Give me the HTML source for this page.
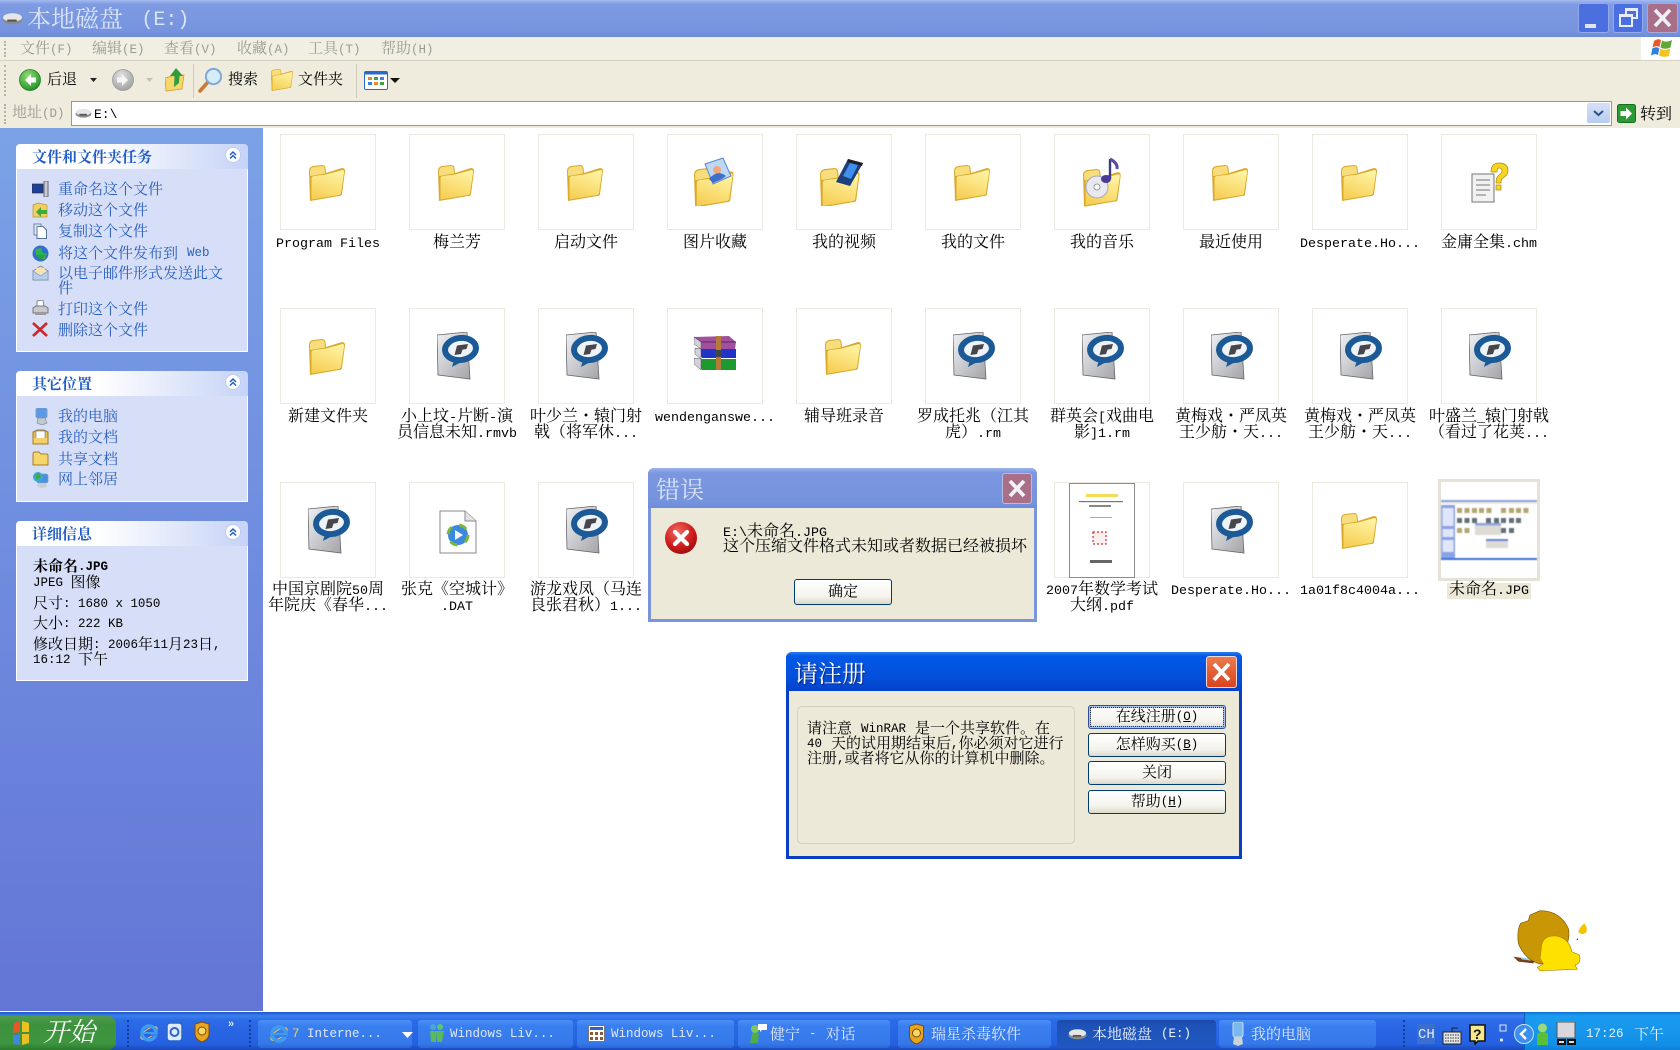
<!DOCTYPE html>
<html lang="zh-CN"><head><meta charset="utf-8"><title>本地磁盘 (E:)</title>
<style>
html,body{margin:0;padding:0;width:1680px;height:1050px;overflow:hidden;background:#fff}
body{position:relative;font-family:"Liberation Mono","Noto Serif CJK SC",serif;font-size:15px;color:#000}
i{font-style:normal;font-family:"Liberation Mono",monospace;font-size:.8333em;line-height:1;position:relative;top:-2px}
div,svg{position:absolute}
.t{position:absolute;white-space:nowrap;line-height:16px;margin-top:2px}
.m{color:#9c9b96}
.m i{top:0}
.d i{top:-1px}
.dl i{top:0}
.dr i{top:-1px}
.g{width:0;border-left:2px dotted #b5b2a4}
.lk{color:#2a5fc2;left:58px}
.hd{left:16px;width:232px;height:25px;border-radius:4px 4px 0 0;background:linear-gradient(90deg,#fff 0,#fff 35%,#c6d3f7 100%)}
.bd{left:16px;width:230px;background:#d6dff7;border:1px solid #fff;border-top:0}
.ht{left:32px;font-weight:bold;color:#215dc6}
.ch{left:225px}
.b{width:94px;height:94px;border:1px solid #ebe9e0;background:#fff}
.l{position:absolute;width:130px;text-align:center;font-size:16px;line-height:16px;white-space:nowrap;margin-top:1px}
.l i{top:0}
.btn{box-sizing:border-box;border:1px solid #003c74;border-radius:3px;background:linear-gradient(#fff,#f4f3ec 70%,#dcd8c8);text-align:center;font-size:15px;line-height:23px}
.btn i{top:-1px}
.tb{top:1020px;height:28px;border-radius:3px;background:linear-gradient(#4a90f5,#3a7ff0 20%,#3478ea 85%,#2a66d8)}
.tt{color:#dfe8fb;top:1026px;font-size:15px}
</style></head><body>
<svg width="0" height="0" style="left:0;top:0"><defs>
<linearGradient id="fg" x1=".7" y1="0" x2=".3" y2="1"><stop offset="0" stop-color="#fff3a2"/><stop offset="1" stop-color="#f6cf55"/></linearGradient>
<linearGradient id="pg" x1="0" y1="0" x2="1" y2="1"><stop offset="0" stop-color="#eff1f5"/><stop offset="1" stop-color="#a4a4a8"/></linearGradient>
<radialGradient id="er" cx=".4" cy=".3" r=".8"><stop offset="0" stop-color="#f06a60"/><stop offset=".6" stop-color="#cf1a1a"/><stop offset="1" stop-color="#8e0b0b"/></radialGradient>
<radialGradient id="gb" cx=".4" cy=".3" r=".8"><stop offset="0" stop-color="#8fdc6e"/><stop offset=".7" stop-color="#3aa53a"/><stop offset="1" stop-color="#1b7a24"/></radialGradient>
<radialGradient id="gy" cx=".4" cy=".3" r=".8"><stop offset="0" stop-color="#e2e2e2"/><stop offset="1" stop-color="#9a9a9a"/></radialGradient>
<symbol id="fd" viewBox="0 0 36 36">
<path d="M1 36L0 6Q0 2 4 1L13 0Q16 0 16.500 3L17 8L33 3Q36 3 36 6L33 29Q33 31 30 31Z" fill="#d9a92c"/>
<path d="M1.200 11L1 6Q1 3 4.500 2L13 1Q15 1 15.500 3L16 8.500Z" fill="#f8dd7c"/>
<path d="M2.500 34.500L2.500 13Q2.500 11.500 5 11L17 9.500L33.500 5Q35.300 5 35 7.500L32 28Q32 29.500 30 30Z" fill="url(#fg)"/>
</symbol>
<symbol id="rp" viewBox="0 0 42 48">
<path d="M0 3L30 0L33 47L1 43Z" fill="url(#pg)" stroke="#66666c" stroke-width=".8"/>
<path d="M17 28L15 35L28 28Z" fill="#1b5a96"/>
<ellipse cx="23.500" cy="17" rx="15.500" ry="11" transform="rotate(-7 23.500 17)" fill="#eef3f8" stroke="#1b5a96" stroke-width="6"/>
<path d="M17.500 23L20 13.500L31 12L29.500 17L25.500 17.600L24 22Z" fill="#47474b"/>
</symbol>
<symbol id="drv" viewBox="0 0 20 12">
<ellipse cx="10" cy="7" rx="9.500" ry="4.500" fill="#8a8a8a"/><ellipse cx="10" cy="5" rx="9" ry="4" fill="#e6e6e6"/><rect x="5" y="7" width="9" height="2" fill="#555"/>
</symbol>
<symbol id="ie" viewBox="0 0 20 20">
<ellipse cx="10" cy="10" rx="9.500" ry="4" transform="rotate(-35 10 10)" fill="none" stroke="#f4c84a" stroke-width="1"/>
<circle cx="10" cy="10" r="7" fill="none" stroke="#3f9bf0" stroke-width="3.400"/><rect x="5" y="9" width="10" height="2" fill="#3f9bf0"/><rect x="12" y="11" width="6" height="2" fill="#3a7ff0"/>
</symbol>
<symbol id="cv" viewBox="0 0 16 16">
<circle cx="8" cy="8" r="7.500" fill="#fff" stroke="#c0cdf0"/><path d="M5 8L8 5L11 8M5 11.500L8 8.500L11 11.500" fill="none" stroke="#215dc6" stroke-width="1.500"/>
</symbol>
</defs></svg>

<!-- title bar -->
<div style="left:0;top:0;width:1680px;height:37px;background:linear-gradient(#a4b9ef 0,#7e9ae2 12%,#7694de 85%,#6d8ad8 100%)"></div>
<svg style="left:2px;top:12px" width="21" height="13"><use href="#drv"/></svg>
<div class="t" style="left:27px;top:6px;font-size:24px;line-height:28px;color:#d9e4f7">本地磁盘 <i style="margin-left:4px">(E:)</i></div>
<div style="left:1578px;top:3px;width:31px;height:30px;box-sizing:border-box;border:1px solid #93a9ea;border-radius:3px;background:#4c6fe0"><div style="left:6px;top:20px;width:11px;height:4px;background:#dfe6fa"></div></div>
<div style="left:1613px;top:3px;width:30px;height:30px;box-sizing:border-box;border:1px solid #93a9ea;border-radius:3px;background:#4c6fe0"><div style="left:11px;top:4px;width:13px;height:11px;box-sizing:border-box;border:2px solid #e6ecfb;border-top-width:3px"></div><div style="left:5px;top:10px;width:14px;height:13px;box-sizing:border-box;border:2px solid #e6ecfb;border-top-width:3px;background:#4c6fe0"></div></div>
<div style="left:1647px;top:3px;width:31px;height:30px;box-sizing:border-box;border:1px solid #a9a9d6;border-radius:3px;background:#a96f88"><svg width="29" height="28"><path d="M7 6L22 22M22 6L7 22" stroke="#eef0f8" stroke-width="3.600"/></svg></div>

<!-- menu -->
<div style="left:0;top:37px;width:1680px;height:23px;background:#f1efe3;border-bottom:1px solid #d6d3c5"></div>
<div class="g" style="left:4px;top:41px;height:16px"></div>
<div class="t m" style="left:20px;top:40px">文件<i>(F)</i></div>
<div class="t m" style="left:92px;top:40px">编辑<i>(E)</i></div>
<div class="t m" style="left:164px;top:40px">查看<i>(V)</i></div>
<div class="t m" style="left:237px;top:40px">收藏<i>(A)</i></div>
<div class="t m" style="left:308px;top:40px">工具<i>(T)</i></div>
<div class="t m" style="left:381px;top:40px">帮助<i>(H)</i></div>
<div style="left:1641px;top:37px;width:39px;height:23px;background:#fff"></div>
<svg style="left:1651px;top:38px" width="22" height="21" viewBox="0 0 22 21"><path d="M3 3Q7 0 10 2L8.500 9Q5 7 1.500 9.500Z" fill="#e8562a"/><path d="M11 2.500Q15 5 21 2L19.500 9.500Q14 12 9.500 9.500Z" fill="#5da836"/><path d="M1.300 10.500Q5 8 8.300 10.300L7 17Q4 15 0 17.500Z" fill="#2f7fdc"/><path d="M9.300 10.800Q14 13 19.300 10.500L18 18Q12 20 8 17.500Z" fill="#f5c022"/></svg>

<!-- toolbar -->
<div style="left:0;top:61px;width:1680px;height:39px;background:#efecde;border-bottom:1px solid #d2cfc0"></div>
<div class="g" style="left:4px;top:65px;height:31px"></div>
<svg style="left:19px;top:69px" width="22" height="22" viewBox="0 0 22 22"><circle cx="11" cy="11" r="10.500" fill="url(#gb)" stroke="#2a7f2a" stroke-width=".8"/><path d="M12 5L6 11L12 17V13.500H17V8.500H12Z" fill="#fff"/></svg>
<div class="t" style="left:47px;top:71px">后退</div>
<svg style="left:90px;top:78px" width="7" height="4"><path d="M0 0H7L3.500 4Z" fill="#222"/></svg>
<svg style="left:112px;top:69px" width="22" height="22" viewBox="0 0 22 22"><circle cx="11" cy="11" r="10.500" fill="url(#gy)" stroke="#999" stroke-width=".8"/><path d="M10 5L16 11L10 17V13.500H5V8.500H10Z" fill="#f4f4f4"/></svg>
<svg style="left:146px;top:78px" width="7" height="4"><path d="M0 0H7L3.500 4Z" fill="#c4c2b6"/></svg>
<svg style="left:165px;top:67px" width="22" height="25" viewBox="0 0 22 25"><path d="M1 24L0 11L7 9L19 8L17 22Z" fill="#f5d76a" stroke="#c9a030" stroke-width=".8"/><path d="M11 1L18 9H14.500L14 16L9 20L9.500 9H5Z" fill="#2f9e3a"/></svg>
<div style="left:193px;top:64px;width:1px;height:34px;background:#cfccbc"></div>
<svg style="left:198px;top:67px" width="26" height="26" viewBox="0 0 26 26"><path d="M2 24L10 15" stroke="#c97a35" stroke-width="3.600" stroke-linecap="round"/><circle cx="15.500" cy="9.500" r="7.600" fill="#d7ecfb" stroke="#7fa9d6" stroke-width="2"/></svg>
<div class="t" style="left:228px;top:71px">搜索</div>
<svg style="left:271px;top:69px" width="22" height="22"><use href="#fd"/></svg>
<div class="t" style="left:298px;top:71px">文件夹</div>
<div style="left:356px;top:64px;width:1px;height:34px;background:#cfccbc"></div>
<svg style="left:364px;top:71px" width="24" height="19" viewBox="0 0 24 19"><rect x=".5" y=".5" width="23" height="18" rx="1.500" fill="#fff" stroke="#2b6bc8"/><rect x=".5" y=".5" width="23" height="3" fill="#2b6bc8"/><g fill="#e08a30"><rect x="4" y="6" width="4" height="3"/><rect x="10" y="11" width="4" height="3"/></g><g fill="#3aa53a"><rect x="10" y="6" width="4" height="3"/><rect x="16" y="11" width="4" height="3"/></g><g fill="#3f7fe0"><rect x="16" y="6" width="4" height="3"/><rect x="4" y="11" width="4" height="3"/></g></svg>
<svg style="left:390px;top:78px" width="10" height="5"><path d="M0 0H10L5 5Z" fill="#111"/></svg>

<!-- address bar -->
<div style="left:0;top:100px;width:1680px;height:28px;background:#efecde"></div>
<div class="g" style="left:4px;top:104px;height:20px"></div>
<div class="t m" style="left:12px;top:104px">地址<i>(D)</i></div>
<div style="left:71px;top:101px;width:1539px;height:23px;background:#fff;border:1px solid #7f9db9"></div>
<svg style="left:75px;top:108px" width="17" height="10"><use href="#drv"/></svg>
<div class="t" style="left:94px;top:107px;font-size:15px"><i style="font-size:13px">E:\</i></div>
<div style="left:1587px;top:103px;width:23px;height:20px;background:linear-gradient(#d4e0f8,#b9cdf0);border-radius:2px"><svg width="23" height="20"><path d="M7 8L11.500 12L16 8" fill="none" stroke="#2f4f88" stroke-width="2"/></svg></div>
<svg style="left:1617px;top:104px" width="19" height="19" viewBox="0 0 19 19"><rect x=".5" y=".5" width="18" height="18" rx="2" fill="#2c9a34" stroke="#1a6e22"/><path d="M9 3.500L15 9.500L9 15.500V12H3.500V7H9Z" fill="#fff"/></svg>
<div class="t" style="left:1640px;top:105px;font-size:16px">转到</div>

<!-- sidebar -->
<div style="left:0;top:128px;width:263px;height:883px;background:linear-gradient(#7ba2e7,#6375d6)"></div>
<!-- panel 1 -->
<div class="hd" style="top:144px"></div>
<div class="bd" style="top:169px;height:182px"></div>
<div class="t ht" style="top:149px">文件和文件夹任务</div>
<svg class="ch" style="top:147px" width="16" height="16"><use href="#cv"/></svg>
<svg style="left:32px;top:181px" width="17" height="16" viewBox="0 0 17 16"><rect x="0" y="3" width="11" height="9" fill="#1c3f9e" stroke="#333" stroke-width=".7"/><rect x="12" y="0" width="4" height="16" fill="#c8ccd2" stroke="#667"/></svg>
<svg style="left:32px;top:202px" width="17" height="16" viewBox="0 0 17 16"><path d="M1 15V3L6 1L15 3V15Z" fill="#f0d060" stroke="#b89530" stroke-width=".7"/><path d="M4 10L9 5V8H15V12H9V15Z" fill="#3caa3c"/></svg>
<svg style="left:33px;top:223px" width="15" height="16" viewBox="0 0 15 16"><path d="M1 1H8V3H1Z" fill="#f2f2f2"/><path d="M4 3.500H10L13.500 7V15.500H4Z" fill="#fff" stroke="#53709c"/><path d="M1 1H8V3.500H4V12H1Z" fill="#dfe6f2" stroke="#53709c" stroke-width=".8"/></svg>
<svg style="left:32px;top:245px" width="17" height="17" viewBox="0 0 17 17"><circle cx="8.500" cy="8.500" r="8" fill="#2f6fd0"/><path d="M3 5Q7 2 10 4L8 8L4 9ZM10 10L15 8L13 14L10 14Z" fill="#4aa848"/><path d="M8.500 5L13.500 10H3.500Z" fill="#25b84a"/><path d="M8.500 15L13.500 10H3.500Z" fill="#25a040"/></svg>
<svg style="left:32px;top:265px" width="17" height="16" viewBox="0 0 17 16"><path d="M1 6L8.500 1L16 6V15H1Z" fill="#dce4f2" stroke="#7f8fae"/><rect x="4" y="3" width="9" height="6" fill="#f6e2b0"/><path d="M1 6L8.500 11L16 6V15H1Z" fill="#b8cdec" stroke="#7f8fae" stroke-width=".7"/></svg>
<svg style="left:32px;top:300px" width="17" height="16" viewBox="0 0 17 16"><path d="M5 1L11 0L12 7H5Z" fill="#fff" stroke="#889"/><path d="M1 8L4 6H13L16 8V13H1Z" fill="#c9c9cd" stroke="#777"/><rect x="3" y="12" width="11" height="3" fill="#9a9aa0"/></svg>
<svg style="left:32px;top:322px" width="16" height="15" viewBox="0 0 16 15"><path d="M1 1L15 14M15 1L1 14" stroke="#c8282d" stroke-width="2.600"/></svg>
<div class="t lk" style="top:181px">重命名这个文件</div>
<div class="t lk" style="top:202px">移动这个文件</div>
<div class="t lk" style="top:223px">复制这个文件</div>
<div class="t lk" style="top:245px">将这个文件发布到 <i>Web</i></div>
<div class="t lk" style="top:265px">以电子邮件形式发送此文</div>
<div class="t lk" style="top:280px">件</div>
<div class="t lk" style="top:301px">打印这个文件</div>
<div class="t lk" style="top:322px">删除这个文件</div>
<!-- panel 2 -->
<div class="hd" style="top:371px"></div>
<div class="bd" style="top:396px;height:105px"></div>
<div class="t ht" style="top:376px">其它位置</div>
<svg class="ch" style="top:374px" width="16" height="16"><use href="#cv"/></svg>
<svg style="left:34px;top:408px" width="15" height="17" viewBox="0 0 15 17"><rect x="2" y="0" width="11" height="10" rx="2" fill="#5a98e8" stroke="#7d9cc8"/><path d="M4 10H11L13 15L8 17L3 15Z" fill="#c3c7d0" stroke="#8890a0" stroke-width=".7"/></svg>
<svg style="left:32px;top:429px" width="17" height="16" viewBox="0 0 17 16"><path d="M1 15V3L5 1H12L16 3V15Z" fill="#e9b94b" stroke="#a37b20"/><rect x="4" y="2" width="9" height="8" fill="#fff" stroke="#6a85b0" stroke-width=".7"/><rect x="1.500" y="9" width="14" height="5.500" fill="#f5cf6a"/></svg>
<svg style="left:32px;top:451px" width="17" height="15" viewBox="0 0 17 15"><path d="M1 14V3Q1 1 3 1H7L9 3H15Q16 3 16 5V14Z" fill="#f4d66c" stroke="#a87f22"/></svg>
<svg style="left:32px;top:471px" width="17" height="17" viewBox="0 0 17 17"><rect x="5" y="3" width="11" height="9" rx="2" fill="#4d8fe0" stroke="#7d9cc8" stroke-width=".7"/><circle cx="6" cy="6" r="5" fill="#3aa8d8"/><path d="M3 4L7 2L9 6L5 9Z" fill="#46a846"/><path d="M6 12H14L15 16L9 17L5 15Z" fill="#c8ccd4"/></svg>
<div class="t lk" style="top:408px">我的电脑</div>
<div class="t lk" style="top:429px">我的文档</div>
<div class="t lk" style="top:451px">共享文档</div>
<div class="t lk" style="top:471px">网上邻居</div>
<!-- panel 3 -->
<div class="hd" style="top:521px"></div>
<div class="bd" style="top:546px;height:134px"></div>
<div class="t ht" style="top:526px">详细信息</div>
<svg class="ch" style="top:524px" width="16" height="16"><use href="#cv"/></svg>
<div class="t d" style="left:33px;top:558px;font-weight:bold">未命名<i>.JPG</i></div>
<div class="t d" style="left:33px;top:574px"><i>JPEG </i>图像</div>
<div class="t d" style="left:33px;top:595px">尺寸<i>: 1680 x 1050</i></div>
<div class="t d" style="left:33px;top:615px">大小<i>: 222 KB</i></div>
<div class="t d" style="left:33px;top:636px">修改日期<i>: 2006</i>年<i>11</i>月<i>23</i>日<i>,</i></div>
<div class="t d" style="left:33px;top:651px"><i>16:12 </i>下午</div>

<!-- thumbs row1 -->
<div class="b" style="left:280px;top:134px"></div><div class="b" style="left:409px;top:134px"></div><div class="b" style="left:538px;top:134px"></div><div class="b" style="left:667px;top:134px"></div><div class="b" style="left:796px;top:134px"></div><div class="b" style="left:925px;top:134px"></div><div class="b" style="left:1054px;top:134px"></div><div class="b" style="left:1183px;top:134px"></div><div class="b" style="left:1312px;top:134px"></div><div class="b" style="left:1441px;top:134px"></div>
<!-- row2 -->
<div class="b" style="left:280px;top:308px"></div><div class="b" style="left:409px;top:308px"></div><div class="b" style="left:538px;top:308px"></div><div class="b" style="left:667px;top:308px"></div><div class="b" style="left:796px;top:308px"></div><div class="b" style="left:925px;top:308px"></div><div class="b" style="left:1054px;top:308px"></div><div class="b" style="left:1183px;top:308px"></div><div class="b" style="left:1312px;top:308px"></div><div class="b" style="left:1441px;top:308px"></div>
<!-- row3 -->
<div class="b" style="left:280px;top:482px"></div><div class="b" style="left:409px;top:482px"></div><div class="b" style="left:538px;top:482px"></div><div class="b" style="left:1054px;top:482px"></div><div class="b" style="left:1183px;top:482px"></div><div class="b" style="left:1312px;top:482px"></div>

<!-- icons row1 -->
<svg style="left:309px;top:165px" width="36" height="36"><use href="#fd"/></svg>
<svg style="left:438px;top:165px" width="36" height="36"><use href="#fd"/></svg>
<svg style="left:567px;top:165px" width="36" height="36"><use href="#fd"/></svg>
<svg style="left:692px;top:156px" width="46" height="50" viewBox="0 0 46 50"><g transform="translate(2 12) scale(1.100)"><use href="#fd" width="36" height="36"/></g><path d="M13 8L31 2L39 20L21 28Z" fill="#bcd8f5" stroke="#5a88c8"/><circle cx="25" cy="14" r="4" fill="#f0a878"/><path d="M17 23Q25 13 34 20L30 23L21 27Z" fill="#3f6fc8"/></svg>
<svg style="left:820px;top:156px" width="48" height="50" viewBox="0 0 48 50"><g transform="translate(0 12) scale(1.100)"><use href="#fd" width="36" height="36"/></g><path d="M16 26L28 3L43 7L30 30Z" fill="#1d3f7c"/><path d="M23 20L30 7L38 9L31 23Z" fill="#3f8ef0"/><path d="M28 3L43 7L42 10L27 6Z" fill="#222"/></svg>
<svg style="left:954px;top:165px" width="36" height="36"><use href="#fd"/></svg>
<svg style="left:1080px;top:155px" width="46" height="52" viewBox="0 0 46 52"><g transform="translate(3 14) scale(1.050)"><use href="#fd" width="36" height="36"/></g><circle cx="17" cy="32" r="11" fill="#e8e8ee" stroke="#a8a8b8"/><circle cx="17" cy="32" r="3" fill="#fff" stroke="#99a"/><path d="M30 4V24" stroke="#3a3a86" stroke-width="2.400"/><path d="M30 4Q38 8 37 14" fill="none" stroke="#5a4a9e" stroke-width="3"/><ellipse cx="26" cy="24" rx="5" ry="4" fill="#4a3a96"/></svg>
<svg style="left:1212px;top:165px" width="36" height="36"><use href="#fd"/></svg>
<svg style="left:1341px;top:165px" width="36" height="36"><use href="#fd"/></svg>
<svg style="left:1470px;top:160px" width="44" height="44" viewBox="0 0 44 44"><path d="M2 14H24V42H2Z" fill="#f2f2f2" stroke="#777"/><g stroke="#777"><path d="M6 20H20M6 25H20M6 30H20M6 35H16"/></g><path d="M21 12Q21 3 29 3Q38 3 38 11Q38 15 33 18Q31 19 31 23H26Q26 17 29 15Q32 13 32 11Q32 8 29 8Q27 8 27 12Z" fill="#f7d420" stroke="#a98c10" stroke-width=".7"/><rect x="26" y="25" width="5" height="5" fill="#f7d420" stroke="#a98c10" stroke-width=".7"/></svg>

<!-- icons row2 -->
<svg style="left:309px;top:339px" width="36" height="36"><use href="#fd"/></svg>
<svg style="left:437px;top:332px" width="42" height="48"><use href="#rp"/></svg>
<svg style="left:566px;top:332px" width="42" height="48"><use href="#rp"/></svg>
<svg style="left:694px;top:336px" width="43" height="35" viewBox="0 0 43 35"><path d="M0 1L35 0L42 6L41 13H7Z" fill="#a0509c"/><path d="M0 1L7 6H42" fill="none" stroke="#5e2a60"/><path d="M2 12L8 13H42V22H8Z" fill="#2234c8"/><path d="M0 22L8 23H42V34H8Z" fill="#1c9a30"/><path d="M0 1V8L7 13V6ZM1 12V18L7 23V13ZM0 22V28L7 34V23Z" fill="#d6d0dc" stroke="#555" stroke-width=".5"/><rect x="22" y="0" width="5" height="34" fill="#b37a3a"/><rect x="21" y="14" width="7" height="7" fill="#444"/></svg>
<svg style="left:825px;top:339px" width="36" height="36"><use href="#fd"/></svg>
<svg style="left:953px;top:332px" width="42" height="48"><use href="#rp"/></svg>
<svg style="left:1082px;top:332px" width="42" height="48"><use href="#rp"/></svg>
<svg style="left:1211px;top:332px" width="42" height="48"><use href="#rp"/></svg>
<svg style="left:1340px;top:332px" width="42" height="48"><use href="#rp"/></svg>
<svg style="left:1469px;top:332px" width="42" height="48"><use href="#rp"/></svg>

<!-- icons row3 -->
<svg style="left:308px;top:506px" width="42" height="48"><use href="#rp"/></svg>
<svg style="left:437px;top:510px" width="42" height="44" viewBox="0 0 42 44"><path d="M3 1H28L39 11V43H3Z" fill="#fdfdfd" stroke="#8a8a8a"/><path d="M28 1V11H39" fill="#e2e2e2" stroke="#8a8a8a"/><circle cx="21" cy="25" r="10" fill="#3a88e0"/><circle cx="21" cy="25" r="10" fill="none" stroke="#7bb83a" stroke-width="3" stroke-dasharray="8 8"/><path d="M18 20L26 25L18 30Z" fill="#f4f4f4"/></svg>
<svg style="left:566px;top:506px" width="42" height="48"><use href="#rp"/></svg>
<!-- pdf thumb -->
<div style="left:1069px;top:483px;width:64px;height:93px;background:#fff;border:1px solid #8c8c8c"></div>
<svg style="left:1070px;top:484px;filter:blur(.3px)" width="64" height="93"><rect x="16" y="10" width="32" height="3" fill="#f4dc5a"/><rect x="9" y="17" width="44" height="1.200" fill="#777"/><rect x="19" y="21" width="22" height="2" fill="#888"/><rect x="20" y="33" width="22" height="1" fill="#aaa"/><rect x="23" y="48" width="13" height="12" fill="#fbeeee" stroke="#d03030" stroke-width="1.200" stroke-dasharray="2 2"/><rect x="20" y="76" width="22" height="3" fill="#666"/></svg>
<svg style="left:1211px;top:506px" width="42" height="48"><use href="#rp"/></svg>
<svg style="left:1341px;top:513px" width="36" height="36"><use href="#fd"/></svg>
<!-- selected thumb -->
<div style="left:1438px;top:479px;width:96px;height:96px;border:3px solid #e6e3d6;background:#fff"></div>
<svg style="left:1441px;top:482px;filter:blur(.6px)" width="96" height="96" viewBox="0 0 96 96"><rect x="0" y="18" width="96" height="2" fill="#8da3e2"/><rect x="0" y="20" width="96" height="2" fill="#ece9de"/><rect x="0" y="23" width="14" height="53" fill="#8ca2e6"/><rect x="1.500" y="26" width="11" height="18" fill="#dfe6f9"/><rect x="1.500" y="47" width="11" height="8" fill="#dfe6f9"/><rect x="1.500" y="58" width="11" height="12" fill="#dfe6f9"/>
<g fill="#b5a670"><rect x="16" y="26" width="5" height="5"/><rect x="23.500" y="26" width="5" height="5"/><rect x="31" y="26" width="5" height="5"/><rect x="38" y="26" width="5" height="5"/><rect x="45.500" y="26" width="5" height="5"/><rect x="60" y="26" width="5" height="5"/><rect x="68" y="26" width="5" height="5"/><rect x="75" y="26" width="5" height="5"/><rect x="82.500" y="26" width="5" height="5"/><rect x="16" y="46" width="5" height="5"/><rect x="23.500" y="46" width="5" height="5"/></g>
<g fill="#646e78"><rect x="16" y="36" width="5" height="5"/><rect x="23.500" y="36" width="5" height="5"/><rect x="31" y="36" width="5" height="5"/><rect x="45" y="36" width="5" height="5"/><rect x="53" y="36" width="5" height="5"/><rect x="60" y="36" width="5" height="5"/><rect x="68" y="36" width="5" height="5"/><rect x="75" y="36" width="5" height="5"/><rect x="60" y="46" width="5" height="5"/><rect x="68" y="46" width="5" height="5"/></g>
<rect x="34" y="41" width="26" height="12" fill="#dddbd4"/><rect x="34" y="41" width="26" height="2.400" fill="#8da3e2"/><rect x="45" y="57" width="22" height="9" fill="#dddbd4"/><rect x="45" y="57" width="22" height="2" fill="#6a85d8"/><rect x="0" y="76" width="96" height="2" fill="#3f72de"/></svg>

<!-- labels -->
<div class="l" style="left:263px;top:234px"><i>Program Files</i></div>
<div class="l" style="left:392px;top:234px">梅兰芳</div>
<div class="l" style="left:521px;top:234px">启动文件</div>
<div class="l" style="left:650px;top:234px">图片收藏</div>
<div class="l" style="left:779px;top:234px">我的视频</div>
<div class="l" style="left:908px;top:234px">我的文件</div>
<div class="l" style="left:1037px;top:234px">我的音乐</div>
<div class="l" style="left:1166px;top:234px">最近使用</div>
<div class="l" style="left:1295px;top:234px"><i>Desperate.Ho...</i></div>
<div class="l" style="left:1424px;top:234px">金庸全集<i>.chm</i></div>

<div class="l" style="left:263px;top:408px">新建文件夹</div>
<div class="l" style="left:392px;top:408px">小上坟<i>-</i>片断<i>-</i>演<br>员信息未知<i>.rmvb</i></div>
<div class="l" style="left:521px;top:408px">叶少兰・辕门射<br>戟（将军休<i>...</i></div>
<div class="l" style="left:650px;top:408px"><i>wendenganswe...</i></div>
<div class="l" style="left:779px;top:408px">辅导班录音</div>
<div class="l" style="left:908px;top:408px">罗成托兆（江其<br>虎）<i>.rm</i></div>
<div class="l" style="left:1037px;top:408px">群英会<i>[</i>戏曲电<br>影<i>]1.rm</i></div>
<div class="l" style="left:1166px;top:408px">黄梅戏・严凤英<br>王少舫・天<i>...</i></div>
<div class="l" style="left:1295px;top:408px">黄梅戏・严凤英<br>王少舫・天<i>...</i></div>
<div class="l" style="left:1424px;top:408px">叶盛兰<i>_</i>辕门射戟<br>（看过了花荚<i>...</i></div>

<div class="l" style="left:263px;top:581px">中国京剧院<i>50</i>周<br>年院庆《春华<i>...</i></div>
<div class="l" style="left:392px;top:581px">张克《空城计》<br><i>.DAT</i></div>
<div class="l" style="left:521px;top:581px">游龙戏凤（马连<br>良张君秋）<i>1...</i></div>
<div class="l" style="left:1037px;top:581px"><i>2007</i>年数学考试<br>大纲<i>.pdf</i></div>
<div class="l" style="left:1166px;top:581px"><i>Desperate.Ho...</i></div>
<div class="l" style="left:1295px;top:581px"><i>1a01f8c4004a...</i></div>
<div style="left:1447px;top:583px;width:84px;height:16px;background:#ece9d8"></div>
<div class="l" style="left:1424px;top:581px">未命名<i>.JPG</i></div>

<!-- error dialog -->
<div style="left:648px;top:468px;width:389px;height:154px;box-sizing:border-box;background:#ece9d8;border:3px solid #7b94de;border-top:0;border-radius:6px 6px 0 0"></div>
<div style="left:648px;top:468px;width:389px;height:40px;border-radius:6px 6px 0 0;background:linear-gradient(#9db3ec 0,#7b97e0 12%,#7693de 85%,#6f8cdc 100%)"></div>
<div class="t" style="left:656px;top:476px;font-size:24px;line-height:30px;color:#d6e2f6">错误</div>
<div style="left:1002px;top:473px;width:30px;height:31px;box-sizing:border-box;border:1px solid #b7bde0;border-radius:3px;background:#a96f88"><svg width="28" height="29"><path d="M7 7L21 22M21 7L7 22" stroke="#f2f3f9" stroke-width="3.800"/></svg></div>
<svg style="left:664px;top:521px" width="34" height="34" viewBox="0 0 34 34"><circle cx="17" cy="17" r="16" fill="url(#er)"/><path d="M11 11L23 23M23 11L11 23" stroke="#fff" stroke-width="4.200" stroke-linecap="round"/></svg>
<div class="t dl" style="left:723px;top:522px;font-size:16px"><i>E:\</i>未命名<i>.JPG</i></div>
<div class="t" style="left:723px;top:537px;font-size:16px">这个压缩文件格式未知或者数据已经被损坏</div>
<div class="btn" style="left:794px;top:579px;width:98px;height:26px;font-size:15px;line-height:25px">确定</div>

<!-- register dialog -->
<div style="left:786px;top:652px;width:456px;height:207px;box-sizing:border-box;background:#ece9d8;border:3px solid #0a3fc4;border-top:0;border-radius:6px 6px 0 0"></div>
<div style="left:786px;top:652px;width:456px;height:39px;border-radius:6px 6px 0 0;background:linear-gradient(#2a7cf0 0,#0258e6 10%,#0350dc 60%,#0342cc 100%)"></div>
<div class="t" style="left:794px;top:660px;font-size:24px;line-height:30px;color:#fff;text-shadow:1px 1px 1px #0b2a80">请注册</div>
<div style="left:1206px;top:656px;width:31px;height:32px;box-sizing:border-box;border:1px solid #f2d8d0;border-radius:3px;background:linear-gradient(#ec7a50,#d8441e)"><svg width="29" height="30"><path d="M7 7L22 23M22 7L7 23" stroke="#fff" stroke-width="3.800"/></svg></div>
<div style="left:797px;top:706px;width:276px;height:136px;border:1px solid #d2d0bf;border-radius:5px"></div>
<div class="t dr" style="left:807px;top:720px">请注意 <i>WinRAR</i> 是一个共享软件。在</div>
<div class="t dr" style="left:807px;top:735px"><i>40</i> 天的试用期结束后<i>,</i>你必须对它进行</div>
<div class="t dr" style="left:807px;top:750px">注册<i>,</i>或者将它从你的计算机中删除。</div>
<div class="btn" style="left:1088px;top:705px;width:138px;height:24px;border-color:#2a4f9c;box-shadow:inset 0 0 0 2px #a8c0ec;outline:1px dotted #333;outline-offset:-3px">在线注册<i>(<u>O</u>)</i></div>
<div class="btn" style="left:1088px;top:733px;width:138px;height:24px">怎样购买<i>(<u>B</u>)</i></div>
<div class="btn" style="left:1088px;top:761px;width:138px;height:24px">关闭</div>
<div class="btn" style="left:1088px;top:790px;width:138px;height:24px">帮助<i>(<u>H</u>)</i></div>

<!-- lion -->
<svg style="left:1490px;top:890px" width="130" height="90" viewBox="0 0 390 270"><path d="M70 200L135 210L130 220L85 215Z" fill="#7a3d1a"/><path d="M92 202L125 207L122 212L95 208Z" fill="#8fd4ea"/><path d="M85 160Q80 120 92 100L115 92L120 75L150 62Q210 62 235 115Q245 160 200 215L150 222Q105 210 85 160Z" fill="#c99606" stroke="#7a5a00" stroke-width="2"/><path d="M155 165Q160 135 200 138Q238 145 245 185L268 195Q275 220 255 225L262 238L150 242L142 232L160 222L150 205Z" fill="#ffe100" stroke="#a98600" stroke-width="2"/><path d="M283 100Q295 115 288 128Q275 138 265 125Q268 112 283 100Z" fill="#f5c400"/><rect x="260" y="146" width="4" height="4" fill="#555"/></svg>

<!-- taskbar -->
<div style="left:0;top:1012px;width:1680px;height:38px;background:linear-gradient(#1c55c8 0,#3a80ef 10%,#2c6ae6 22%,#2560e0 85%,#1a48b8 100%)"></div>
<div style="left:0;top:1016px;width:116px;height:34px;border-radius:0 8px 8px 0;background:linear-gradient(#4f9c4f,#3d923e 25%,#3e953f 80%,#2c7a2e)"></div>
<svg style="left:11px;top:1020px" width="20" height="27" viewBox="0 0 20 27"><path d="M3 3L9 1L9 12L2 13Z" fill="#e8562a"/><path d="M11 1L18 3L18 12L11 12Z" fill="#f0c020"/><path d="M2 15L9 14V25L2 24Z" fill="#3f86df"/><path d="M11 14H18V23L11 25Z" fill="#e9c024"/></svg>
<div class="t" style="left:43px;top:1017px;font-size:26px;line-height:30px;font-style:italic;color:#f4fbf2">开始</div>
<div class="g" style="left:127px;top:1020px;height:27px;border-color:#123e9c"></div>
<svg style="left:139px;top:1022px" width="20" height="22"><use href="#ie"/></svg>
<svg style="left:166px;top:1022px" width="17" height="20" viewBox="0 0 17 20"><rect x="1" y="1" width="15" height="18" rx="3" fill="#dfeafa" stroke="#2a66c8" stroke-width="1.500"/><circle cx="8.500" cy="10" r="4" fill="none" stroke="#2a66c8" stroke-width="2"/></svg>
<svg style="left:194px;top:1021px" width="16" height="22" viewBox="0 0 16 22"><path d="M1 3L8 1L15 3V14Q14 19 8 21Q2 19 1 14Z" fill="#e8a520" stroke="#7a4a10"/><circle cx="8" cy="10" r="4" fill="#f7d860" stroke="#7a4a10"/></svg>
<div class="t" style="left:228px;top:1016px;color:#dde8fa;font:bold 11px/12px 'Liberation Sans',sans-serif">»</div>
<div class="g" style="left:249px;top:1020px;height:27px;border-color:#123e9c"></div>

<div class="tb" style="left:258px;width:154px"></div>
<svg style="left:269px;top:1023px" width="20" height="22"><use href="#ie"/></svg>
<div class="t tt" style="left:292px;font-size:15px"><i style="color:#f0d050">7</i><i> Interne...</i></div>
<svg style="left:402px;top:1032px" width="11" height="6"><path d="M0 0H11L5.500 6Z" fill="#fff"/></svg>

<div class="tb" style="left:418px;width:155px"></div>
<svg style="left:428px;top:1023px" width="18" height="20" viewBox="0 0 18 20"><circle cx="5" cy="4" r="3" fill="#4aa8d8"/><circle cx="12" cy="4" r="3" fill="#5ac86a"/><path d="M2 8H9L8 19H3ZM9 8H16L14 19H9Z" fill="#5aba5a"/></svg>
<div class="t tt" style="left:450px"><i>Windows Liv...</i></div>

<div class="tb" style="left:577px;width:157px"></div>
<svg style="left:588px;top:1025px" width="17" height="17" viewBox="0 0 17 17"><rect x=".5" y=".5" width="16" height="16" fill="#fff" stroke="#777"/><rect x="2" y="2" width="13" height="3" fill="#3a60c8"/><g fill="#8a5a3a"><rect x="2" y="7" width="3" height="3"/><rect x="7" y="7" width="3" height="3"/><rect x="12" y="7" width="3" height="3"/><rect x="2" y="12" width="3" height="3"/><rect x="7" y="12" width="3" height="3"/><rect x="12" y="12" width="3" height="3"/></g></svg>
<div class="t tt" style="left:611px"><i>Windows Liv...</i></div>

<div class="tb" style="left:738px;width:152px"></div>
<svg style="left:749px;top:1023px" width="19" height="20" viewBox="0 0 19 20"><circle cx="6" cy="6" r="4" fill="#7cc85a"/><path d="M1 20L3 10H10L9 20Z" fill="#4fae4a"/><path d="M9 1H18V7H13L11 9V7H9Z" fill="#fff"/></svg>
<div class="t tt" style="left:770px">健宁 <i>-</i> 对话</div>

<div class="tb" style="left:898px;width:153px"></div>
<svg style="left:908px;top:1023px" width="17" height="22" viewBox="0 0 16 22"><path d="M1 3L8 1L15 3V14Q14 19 8 21Q2 19 1 14Z" fill="#e8a520" stroke="#7a4a10"/><circle cx="8" cy="10" r="4" fill="#f7d860" stroke="#7a4a10"/></svg>
<div class="t tt" style="left:931px">瑞星杀毒软件</div>

<div class="tb" style="left:1057px;width:159px;background:linear-gradient(#1a4aa8,#1e52b7 20%,#2058c0)"></div>
<svg style="left:1068px;top:1028px" width="19" height="12"><use href="#drv"/></svg>
<div class="t tt" style="left:1092px;color:#f0f4fd">本地磁盘 <i>(E:)</i></div>

<div class="tb" style="left:1219px;width:157px"></div>
<svg style="left:1230px;top:1022px" width="16" height="24" viewBox="0 0 16 24"><rect x="3" y="0" width="10" height="15" rx="2" fill="#7ab8f0" stroke="#c8dcf4"/><path d="M4 15H12L13 22L8 24L3 22Z" fill="#ccd2dc"/></svg>
<div class="t tt" style="left:1251px">我的电脑</div>

<div class="g" style="left:1403px;top:1020px;height:27px;border-color:#123e9c"></div>
<div style="left:1417px;top:1024px;width:18px;height:20px;background:#3a6fd0"></div>
<div class="t" style="left:1418px;top:1027px;color:#dfe8fb;font-size:13px"><i style="font-size:14px">CH</i></div>
<svg style="left:1442px;top:1026px" width="20" height="19" viewBox="0 0 20 19"><rect x="1" y="6" width="18" height="12" fill="#e6e6e6" stroke="#222"/><path d="M3 9H17M3 12H17M3 15H17" stroke="#333" stroke-dasharray="1.500 1"/><path d="M10 6V2H16" fill="none" stroke="#222"/></svg>
<svg style="left:1469px;top:1024px" width="17" height="21" viewBox="0 0 17 21"><path d="M1 1H16V17H9L6 20V17H1Z" fill="#f7e88a" stroke="#111" stroke-width="1.600"/></svg>
<div class="t" style="left:1473px;top:1024px;font:bold 14px/16px 'Liberation Sans',sans-serif;color:#111">?</div>
<svg style="left:1498px;top:1024px" width="9" height="21"><rect x="2" y="1" width="6" height="6" fill="none" stroke="#dfe8fb"/><circle cx="3.500" cy="16" r="1.600" fill="#dfe8fb"/></svg>
<div style="left:1524px;top:1012px;width:156px;height:38px;background:linear-gradient(#0c74d8 0,#1b9cf0 10%,#1290e8 85%,#0e7fd8 100%);border-left:1px solid #0c5fb8"></div>
<svg style="left:1514px;top:1024px" width="20" height="20"><circle cx="10" cy="10" r="9.500" fill="#3c8ff0" stroke="#c8e0fa"/><path d="M12 5L7 10L12 15" fill="none" stroke="#fff" stroke-width="2.400"/></svg>
<svg style="left:1536px;top:1022px" width="13" height="24" viewBox="0 0 13 24"><circle cx="6.500" cy="6" r="4.500" fill="#9ad878"/><path d="M1 23V14Q1 10 6.500 10Q12 10 12 14V23Z" fill="#58c038"/></svg>
<svg style="left:1556px;top:1022px" width="21" height="24" viewBox="0 0 21 24"><rect x="1" y="0" width="18" height="16" fill="#d8d8dc" stroke="#555"/><rect x="1" y="17" width="9" height="6" fill="#111"/><rect x="11" y="17" width="9" height="6" fill="#111"/><rect x="3" y="19" width="5" height="2" fill="#ddd"/><rect x="13" y="19" width="5" height="2" fill="#ddd"/></svg>
<div class="t" style="left:1586px;top:1026px;color:#e6f2fc;font-size:15px"><i>17:26</i></div>
<div class="t" style="left:1634px;top:1026px;color:#e6f2fc;font-size:15px">下午</div>
</body></html>
